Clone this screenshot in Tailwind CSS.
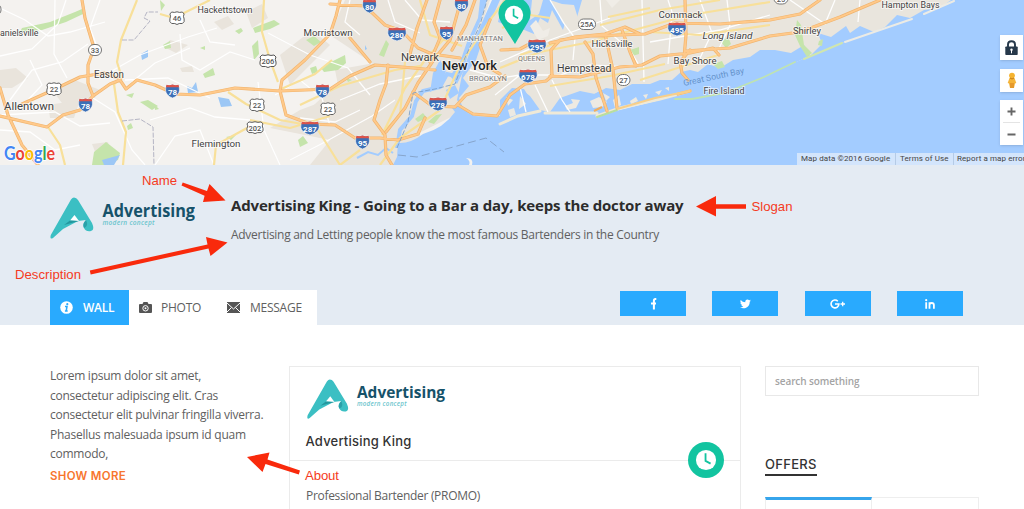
<!DOCTYPE html>
<html lang="en">
<head>
<meta charset="utf-8">
<meta name="viewport" content="width=device-width, initial-scale=1">
<title>Advertising King</title>
<script src="https://cdn.jsdelivr.net/npm/@tailwindcss/browser@4"></script>
</head>
<body class="bg-white">
<div class="relative h-[509px] w-[1024px] overflow-hidden bg-white font-['Open_Sans',sans-serif] text-[#606060]">

<!-- Shared symbols -->
<svg class="absolute h-0 w-0" aria-hidden="true">
  <defs>
    <symbol id="interstate" viewBox="0 0 20 16" preserveAspectRatio="none"><path d="M2 1Q6 2 10 0.5Q14 2 18 1Q21 8 17 12Q14 15 10 16Q6 15 3 12Q-1 8 2 1Z" fill="#3c6fb6" stroke="#fff" stroke-width=".7"/><path d="M2 .8Q6 2 10 .5Q14 2 18 .8L18.8 3.8H1.2Z" fill="#dc5349"/></symbol>
    <symbol id="usroute" viewBox="0 0 18 14" preserveAspectRatio="none"><path d="M3 1Q6 2 9 .8Q12 2 15 1L17 3Q15.500 5 17 8Q18 11 15 12.500Q11 12 9 13.500Q7 12 3 12.500Q0 11 1 8Q2.500 5 1 3Z" fill="#fff" stroke="#555" stroke-width="1"/></symbol>
    <symbol id="brand" viewBox="0 0 145 43">
      <path d="M24 .5Q26.500 .5 28 3L42 26Q45 33 41 34Q36 35 34 31Q32 27 36 23L28 24L13 32L3 41Q-.5 43 .8 38L21 2.500Q22.500 .5 24 .5Z" fill="#3bbfc3"/>
      <path d="M24.500 18L29 24L20 23.500Z" fill="#fff"/><path d="M20 23.500L29 24L14 28Z" fill="#23979e"/><path d="M36 23Q32 27 34 31Q39 29 36 23Z" fill="#2aa0a8"/>
      <text x="52.500" y="19.500" textLength="92.500" lengthAdjust="spacingAndGlyphs" font-family="Open Sans, sans-serif" font-size="17.500" font-weight="700" fill="#16526a">Advertising</text>
      <text x="52.500" y="28" textLength="52" font-family="Open Sans, sans-serif" font-size="6.500" font-weight="600" font-style="italic" fill="#6cc5cd">modern concept</text>
    </symbol>
    <symbol id="clock" viewBox="0 0 24 24"><circle cx="12" cy="12" r="11" fill="#fff"/><path d="M11.500 4.500V13L17 16" fill="none" stroke="#12c4a0" stroke-width="2"/></symbol>
  </defs>
</svg>

<!-- Map -->
<section class="relative h-[165px] w-full overflow-hidden">
<svg class="block" width="1024" height="165" viewBox="0 0 1024 165">
  <rect width="1024" height="165" fill="#f4f2ef"/>
  <!-- built-up areas -->
  <g fill="#e9e4dc">
    <path d="M345 0H490L470 60L455 115L395 145L380 165H320L345 140L375 118L340 100L300 118L330 90L375 65L330 35Z"/>
    <path d="M280 55L312 30L330 45L290 85Z"/><path d="M335 70L420 55V165H310L330 140L270 128L300 110L340 95Z"/>
    <path d="M52 90L75 80L100 90L90 105L62 103Z"/><path d="M48 105L80 100L74 118L50 118Z"/><path d="M0 70L16 68L28 78L12 88H0Z"/><path d="M170 40L188 45L176 53L164 47Z"/><path d="M214 22L228 16L234 24L222 30Z"/><path d="M246 12L262 4L268 18L252 28Z"/>
    <path d="M92 144L108 142L110 152L96 154Z"/><path d="M180 68L192 66L194 72H182Z"/>
  </g>
  <!-- sea and shore -->
  <path d="M393 165L397 157L398 143Q410 144 423 134Q444 128 455 112L452 108L458 104L463 109Q472 118 490 117L520 108L534 112L545 112L560 112L575 113L597 114L620 110L660 100L680 93L700 98L720 94L764 77L807 57L844 42L900 20L954 0H1024V165Z" fill="#a3ccff"/>
  <path d="M463 0H960L897 24L844 42L807 57L764 78L720 95L700 99L680 94L597 115L540 115L497 130L482 118L465 112L457 100L462 75L472 45L492 0Z" fill="#a3ccff"/>
  <path d="M500 0H951L940 8L924 10L910 18L897 15L885 27L874 32L860 26L850 33L846 26L831 37L818 33L822 44L810 56L804 45L791 53L775 50L760 50L750 57L733 60L720 68L708 64L698 72L690 70L681 72L672 80L660 80L650 84L632 84L620 90L606 88L595 94L580 91L560 98L550 112L540 110L530 96L522 90L512 95L500 108L510 114L494 117L474 116L463 108L459 98L469 86L463 78L476 60L484 36Z" fill="#e9e5dd"/>
  <path d="M498 22L503 0H582L577 17L570 6L563 30L552 10L548 23L540 18L534 34L522 29L513 38L508 26Z" fill="#a3ccff"/>
  <path d="M550 0L556 9L562 22L570 31L580 25L574 5L562 4ZM532 0H543L539 14L530 20Z" fill="#e9e5dd"/>
  <path d="M606 0L612 8L620 0ZM530 26L536 20L543 31L550 28L548 36L538 40Z" fill="#f0ede7"/>
  <path d="M487 0L480 22L470 45L464 70L457 84L450 76L460 62L467 42L478 18L480 0Z" fill="#a3ccff"/>
  <path d="M456 76L447 74L440 87L423 91L416 101L412 116L400 130L397 148" fill="none" stroke="#a3ccff" stroke-width="4"/>
  <path d="M440 60L433 73L430 92L442 86L446 70Z" fill="#a3ccff"/>
  <path d="M446 90L455 85L459 93L450 99Z" fill="#a3ccff"/>
  <path d="M357 158L368 152L378 155L386 148L393 153" fill="none" stroke="#a3ccff" stroke-width="2"/>
  <path d="M500 100L512 88L524 89L532 102L522 118L500 124Z" fill="#a3ccff"/><path d="M506 97l7 3-5 6zM520 96l6 8-7 5zM508 110l6-2 2 7-6 2z" fill="#ece9e2"/>
  <path d="M565 97L590 96L602 90L620 93L640 86L662 85L676 81L684 73L690 83L690 91L640 102L607 111H560Z" fill="#a3ccff"/>
  <g fill="#eeeae2"><path d="M565 106l8-3-2-4 9 1-4 8-9 2zM590 101l9-4 8 5-5 5-9 1zM603 93l7 4-4 4zM613 100l6-5 2 10-6 3zM630 101l6-4 2 4-7 3zM643 95l5-1-2 5zM655 92l7-2-3 5zM665 88l4-1v4z"/></g>
  <g fill="none" stroke-linecap="round">
    <path d="M500 124L518 116L540 111M545 113H597M597 116L620 108L660 99L690 91" stroke="#efe9d7" stroke-width="3"/>
    <path d="M675 99H692L725 93L764 77L795 62" stroke="#bfe3b2" stroke-width="1.800"/><path d="M804 59L842 43" stroke="#d0e6ae" stroke-width="2"/><path d="M845 42L912 19M924 14L954 1" stroke="#ecebe5" stroke-width="2"/>
    <path d="M597 117L617 110" stroke="#b8dea0" stroke-width="2"/>
  </g>
  <path d="M398 155L417 157L486 138L504 152" fill="none" stroke="#87a5cc" stroke-dasharray="8 4"/>
  <path d="M466 158Q474 158 472 165H469Q471 161 466 158Z" fill="#f4f2ef"/>
  <!-- parks -->
  <g fill="#c5e4ab">
    <path d="M22 28L50 22L75 12L82 9L83 14L66 22L42 30L20 32Z"/><path d="M94 152L106 142L120 153L118 160L104 165H92Z"/><path d="M127 126L131 123L133 128L128 130ZM126 95L134 93L132 98ZM140 102L148 100L158 106L152 110ZM155 105l4 4-4 1zM163 45l7-4 1 7-6 1zM200 48l5-2v4zM203 74L213 68L215 75L205 78ZM226 137l10-2-5 5zM235 31l6-3 2 3-4 3z"/>
    <path d="M253 28L274 20L280 24L270 29L255 33ZM306 40L314 36L321 42L314 46ZM321 68L331 62L345 55L346 63L338 70L324 72ZM310 68l6-2 2 6-6 2zM379 55L386 40L389 44L384 57ZM252 46l6-6 1 14-5 6zM298 140l5-4 5 7-8 4zM415 119L423 113L427 118L418 122ZM428 122l8-7 6-1-8 10zM630 50L639 47V54L632 56ZM721 42L728 37L731 44L726 48ZM797 20L801 25L804 45L812 53L807 57L800 46L795 35ZM819 41l4-2-1 7-4-1zM713 64l9-3 3 6-7 2zM160 0l5 5-4 6zM346 78l6 2-4 2z"/>
  </g>
  <g fill="#9cc7f5"><path d="M141 54L148 50V57L142 60ZM187 86L192 88L196 82L198 92L188 93ZM218 97L229 99L232 106L221 107ZM102 160L120 155L114 165H104ZM365 45l2 4-2 1zM364 3h4v4h-4z"/></g>
  <!-- minor roads -->
  <g fill="none" stroke="#fff" stroke-width="1.300" opacity=".95">
    <path d="M0 8L25 20L48 36L70 32L105 22M0 56L32 49L58 24L66 0M10 100L32 70L62 62L88 44M55 0L54 54L67 78M110 72L140 55L188 37L217 28M180 34L182 60L200 70L230 52L255 60M132 82L155 63L190 48M93 98L115 112L132 150L145 165M0 130L30 132L55 150L80 145M150 120L190 108L215 117L250 120M155 165L175 136L200 130L214 165M0 115L55 112L80 126L110 123M258 82L264 130L280 165M268 33L310 55L348 68L370 95M290 160L325 142L372 116L395 100M350 0L345 22L360 35M275 95L300 80L322 98L330 126M200 20L210 42L235 45M125 80L168 78L210 98M20 140L34 160M30 60L42 85L28 100M100 0L90 28L96 44"/>
    <path d="M300 118L335 122L360 110M388 0L395 22L420 33M405 0L422 20L450 22M340 100L380 84L424 75M470 70L500 78L520 75M495 95L520 75L560 75L590 65L625 67M550 0L565 25L575 38L573 60M600 0L602 26L630 50L640 67M642 0L644 82M668 0L672 12L668 64M700 0L712 33L700 58M727 0L730 25L716 55M790 0L825 24L835 0M860 0L858 22M500 62L550 40L610 18M650 42L720 30L770 15M552 80L562 100L570 112M520 87L526 112M535 85L548 112"/>
  </g>
  <!-- secondary roads -->
  <g fill="none" stroke="#f8e09a" stroke-width="2.200" stroke-linejoin="round">
    <path d="M137 0L121 40L117 62L122 78L114 84L118 112L126 132L123 165M48 127L60 145L65 165M160 14L174 18L210 0M214 165L216 145L247 128M264 0L262 32L270 60L278 82M250 120L290 128L330 116M279 90L315 74L332 60M313 122L340 165L360 150M228 92L246 104L280 120L302 124M300 105L340 86L395 70L420 66M420 0L430 35L462 46M405 62L400 115L385 130M380 165L400 138L440 110L460 65L490 20L505 0M382 135L405 88L425 60L450 32M500 68L540 52L590 42L625 32M502 28L530 15L550 18M600 25L660 10L720 0M615 35L690 15L770 2M550 86L610 76L665 64M640 80L690 64L718 55M650 32L700 35L770 25M520 55L560 42M608 17L650 8"/>
  </g>
  <!-- highways -->
  <g fill="none" stroke="#f0b46e" stroke-width="3.200" stroke-linejoin="round" stroke-linecap="round">
    <path id="hw" d="M82 0L85 18L94 48L88 65L88 83L93 96M0 88L8 115L22 145L38 165M0 116L47 127L63 115L80 110L93 96L110 84L120 80L126 89L137 80L155 85L175 94L200 95L235 88L280 91L330 89L350 76L375 65L402 67L435 70M22 104L53 90L80 77L104 73L120 79M340 0L336 16L330 34L305 60L282 80L280 91L286 115L310 124L335 125L355 138L380 138L398 140L418 134L425 118M330 4L365 6L385 25L402 31L418 48L432 54L460 58M350 38L370 62M388 65L386 84L380 100L374 120L385 135L386 155L392 165M386 132L405 108L418 83L435 58L450 40L461 0M413 92L432 106L455 107L466 95L490 87L505 76M410 54L417 28L427 0M440 0L434 22L440 38L430 62M475 0L466 25L452 50M490 20L480 45L488 67L500 74M458 105L473 114L497 116L510 95L525 84L546 81L552 76L551 50L560 40L590 36L620 35L645 34L675 23L720 24L770 20L800 14L820 0M550 43L575 37L605 34L625 27L640 34M585 42L593 54L596 78L607 111M605 34L613 70L617 108M622 30L630 52L636 66M550 76L580 77L620 67L642 65L660 56L690 53L713 48L719 55M690 50L680 62L682 73L688 80M690 91L678 94M685 51L730 48L770 36L800 32L840 17L880 0M685 0L686 35L684 58M501 50L520 49L535 41"/>
    <use href="#hw" stroke="#ffc98a" stroke-width="1.900"/>
  </g>
  <path d="M617 109L655 98L690 91" fill="none" stroke="#f7cf8a" stroke-width="2"/><path d="M594 111L602 107" fill="none" stroke="#f2ae5c" stroke-width="2"/>
  <path d="M122 40L134 40L150 21L144 18L147 12L158 12M122 121L140 119L153 127L154 165" fill="none" stroke="#b5b5c4" stroke-width="1" stroke-dasharray="5 1.500"/>
  <path d="M397 148L408 122L413 93L435 89L455 84L464 60L480 25L487 0" fill="none" stroke="#7b9fc8" stroke-width=".9" stroke-dasharray="5 2"/>
  <!-- interstate shields -->
  <use href="#interstate" x="78" y="98" width="15" height="14"/><use href="#interstate" x="165" y="84" width="15" height="14"/><use href="#interstate" x="315" y="84" width="15" height="14"/><use href="#interstate" x="300" y="121" width="20" height="14"/><use href="#interstate" x="355" y="135" width="15" height="14"/><use href="#interstate" x="362" y="-1" width="15" height="14"/><use href="#interstate" x="387" y="27" width="20" height="14"/><use href="#interstate" x="439" y="26" width="15" height="14"/><use href="#interstate" x="454" y="-2" width="15" height="14"/><use href="#interstate" x="428" y="97" width="20" height="14"/><use href="#interstate" x="527" y="39" width="20" height="14"/><use href="#interstate" x="518" y="69" width="20" height="14"/><use href="#interstate" x="667" y="22" width="20" height="14"/>
  <g font-family="Roboto, sans-serif" font-size="8" font-weight="700" fill="#fff" text-anchor="middle">
    <text x="85.500" y="109">78</text><text x="172.500" y="95">78</text><text x="322.500" y="95">78</text><text x="310" y="132">287</text><text x="362.500" y="146">95</text><text x="369.500" y="10">80</text><text x="397" y="38">280</text><text x="446.500" y="37">95</text><text x="461.500" y="9">80</text><text x="438" y="108">278</text><text x="537" y="50">295</text><text x="528" y="80">678</text><text x="677" y="33">495</text>
  </g>
  <use href="#usroute" x="46" y="82" width="16" height="14"/><use href="#usroute" x="169" y="11" width="16" height="14"/><use href="#usroute" x="249" y="98" width="16" height="14"/><use href="#usroute" x="246" y="121" width="18" height="13"/><use href="#usroute" x="259" y="54" width="18" height="14"/><use href="#usroute" x="320" y="102" width="16" height="14"/>
  <g fill="#fff" stroke="#666" stroke-width=".9"><rect x="88.500" y="44.500" width="13" height="11" rx="5.500"/><rect x="578.500" y="19" width="17" height="10.500" rx="5"/><rect x="617" y="74.500" width="13" height="11" rx="5.500"/><rect x="774" y="-7" width="14" height="11" rx="5.500"/><rect x="-9" y="4" width="10" height="11" rx="5"/></g>
  <g font-family="Roboto, sans-serif" font-size="7.500" font-weight="500" fill="#555" text-anchor="middle"><text x="54" y="92">22</text><text x="177" y="21">46</text><text x="257" y="108">22</text><text x="255" y="131">202</text><text x="268" y="64">206</text><text x="328" y="112">22</text><text x="95" y="52.500">33</text><text x="587" y="27">25A</text><text x="623.500" y="82.500">27</text><text x="781" y="2">25</text></g>
  <!-- place names -->
  <g font-family="Roboto, sans-serif" font-size="9.500" fill="#434343" stroke="#fff" stroke-opacity=".6" stroke-width="2" paint-order="stroke" stroke-linejoin="round">
    <text x="197.500" y="13" textLength="55" lengthAdjust="spacingAndGlyphs">Hackettstown</text><text x="0" y="36" textLength="38.500" lengthAdjust="spacingAndGlyphs">anielsville</text><text x="94" y="78" textLength="30" lengthAdjust="spacingAndGlyphs" font-size="10">Easton</text><text x="4" y="110" textLength="50" lengthAdjust="spacingAndGlyphs" font-size="11.500">Allentown</text><text x="191.500" y="147" textLength="49" lengthAdjust="spacingAndGlyphs">Flemington</text><text x="303.500" y="35.500" textLength="49" lengthAdjust="spacingAndGlyphs">Morristown</text><text x="401" y="60.500" textLength="38" lengthAdjust="spacingAndGlyphs" font-size="11">Newark</text>
    <text x="442" y="69.500" textLength="55" lengthAdjust="spacingAndGlyphs" font-size="13" font-weight="500" fill="#222">New York</text>
    <text x="457" y="40.500" textLength="46" lengthAdjust="spacingAndGlyphs" font-size="7.500" fill="#777">MANHATTAN</text><text x="469" y="81" textLength="38" lengthAdjust="spacingAndGlyphs" font-size="7.500" fill="#777">BROOKLYN</text><text x="518" y="61" textLength="27" lengthAdjust="spacingAndGlyphs" font-size="7.200" fill="#777">QUEENS</text>
    <text x="591.500" y="47" textLength="41" lengthAdjust="spacingAndGlyphs">Hicksville</text><text x="557" y="71.500" textLength="54.500" lengthAdjust="spacingAndGlyphs" font-size="11">Hempstead</text><text x="658.500" y="17.500" textLength="44" lengthAdjust="spacingAndGlyphs">Commack</text><text x="702.500" y="38.500" textLength="50" lengthAdjust="spacingAndGlyphs" font-style="italic" font-size="9.800">Long Island</text><text x="673.500" y="64" textLength="43" lengthAdjust="spacingAndGlyphs">Bay Shore</text><text x="703.500" y="93.500" textLength="41" lengthAdjust="spacingAndGlyphs" font-size="9">Fire Island</text><text x="793" y="33.500" textLength="28" lengthAdjust="spacingAndGlyphs">Shirley</text><text x="881.500" y="7.500" textLength="58" lengthAdjust="spacingAndGlyphs" font-size="9">Hampton Bays</text>
  </g>
  <text transform="translate(684 86) rotate(-12)" textLength="62" lengthAdjust="spacingAndGlyphs" font-family="Roboto, sans-serif" font-size="8.500" fill="#6593cc">Great South Bay</text>
  <!-- Google wordmark -->
  <text x="4" y="159.500" textLength="51" lengthAdjust="spacingAndGlyphs" font-family="Lato, sans-serif" font-size="18" font-weight="700" stroke="#fff" stroke-width="1.500" paint-order="stroke"><tspan fill="#4285f4">G</tspan><tspan fill="#ea4335">o</tspan><tspan fill="#fbbc05">o</tspan><tspan fill="#4285f4">g</tspan><tspan fill="#34a853">l</tspan><tspan fill="#ea4335">e</tspan></text>
  <!-- marker -->
  <path d="M515 44L501 22A16 16 0 1 1 528 22Z" fill="#12c4a0"/><use href="#clock" x="504" y="5" width="20" height="20"/>
</svg>
<div class="absolute right-px top-[35px] flex w-[23px] flex-col">
  <div class="grid h-[25px] place-items-center bg-white shadow-sm"><svg width="13" height="16" viewBox="0 0 13 16"><path d="M3 8V4.500Q3 1.200 6.500 1.200T10 4.500V8" fill="none" stroke="#26384a" stroke-width="1.900"/><rect x=".3" y="6.500" width="12.400" height="8.500" rx=".8" fill="#26384a"/><circle cx="6.500" cy="9.800" r="1.200" fill="#fff"/><path d="M6.500 10V13.300" stroke="#fff"/></svg></div>
  <div class="mt-[9px] grid h-[23px] place-items-center bg-white shadow-sm"><svg width="10" height="17" viewBox="0 0 10 17"><path d="M2.500 6H7.500L9.300 11L8 11.500L7 16H3L2 11.500L.7 11Z" fill="#f4b43a"/><path d="M3 11H7V16H3Z" fill="#e5992c"/><circle cx="5" cy="3.600" r="2.900" fill="#f5b32f"/><path d="M3 6Q5 8 7 6" stroke="#c47a16" fill="none"/></svg></div>
  <div class="mt-2 flex h-[45px] flex-col items-center bg-white shadow-sm"><svg width="23" height="45" viewBox="0 0 23 45"><path d="M7.500 11.500H15.500M11.500 7.500V15.500M7.500 34.500H15.500" stroke="#666" stroke-width="1.900"/><path d="M3 22.500H20" stroke="#e4e4e4"/></svg></div>
</div>
<div class="absolute bottom-0 left-[797px] flex h-3 w-[230px] items-center whitespace-nowrap bg-[#d3e5fc] font-[Roboto] text-[8px] leading-3 tracking-[0.1px] text-[#444]">
  <span class="w-[98px] pl-1">Map data ©2016 Google</span><span class="w-[58px] border-l border-[#b5cbe6] pl-1">Terms of Use</span><span class="border-l border-[#b5cbe6] pl-[3px]">Report a map error</span>
</div>
</section>

<!-- Profile header -->
<header class="h-[160px] bg-[#e4ebf3] pl-[50px]">
  <div class="flex h-[125px]">
    <svg class="mt-8 h-[43px] w-[145px] shrink-0"><use href="#brand"/></svg>
    <div class="ml-9 pt-[29px] whitespace-nowrap">
      <h1 class="text-[15px] leading-[22px] font-bold tracking-[-0.155px] text-[#2c2c2c]">Advertising King - Going to a Bar a day, keeps the doctor away</h1>
      <p class="mt-2 text-[12px] leading-[22px] tracking-[-0.285px]">Advertising and Letting people know the most famous Bartenders in the Country</p>
    </div>
  </div>
  <div class="flex items-start">
    <nav class="flex h-[35px] w-[267px] bg-white text-[12px] leading-[35px] tracking-[-0.25px]">
      <a class="flex w-[79px] items-center bg-[#29aafe] pl-2.5 font-semibold text-white"><svg class="mr-[10px]" width="13" height="13" viewBox="0 0 13 13"><circle cx="6.500" cy="6.500" r="6.300" fill="#fff"/><circle cx="7.300" cy="3.200" r="1.100" fill="#29aafe"/><path d="M5 5.500H7L6.200 10H7.700M4.900 10H6.200" fill="none" stroke="#29aafe" stroke-width="1.500"/></svg>WALL</a>
      <a class="flex w-[87px] items-center pl-2.5"><svg class="mr-[9px]" width="13" height="11" viewBox="0 0 13 11"><path d="M1 2H3.500L4.500 0H8.500L9.500 2H12Q13 2 13 3V10Q13 11 12 11H1Q0 11 0 10V3Q0 2 1 2Z" fill="#555"/><circle cx="6.500" cy="6.300" r="2.700" fill="none" stroke="#fff" stroke-width="1"/><circle cx="6.500" cy="6.300" r="1" fill="#fff"/></svg>PHOTO</a>
      <a class="flex items-center pl-[11px]"><svg class="mr-[10px]" width="13" height="11" viewBox="0 0 13 11"><path d="M0 0H13V11H0Z" fill="#555"/><path d="M0 1L6.500 7L13 1M0 10L4.500 5.500M13 10L8.500 5.500" fill="none" stroke="#fff" stroke-width="1"/></svg>MESSAGE</a>
    </nav>
    <div class="ml-[303px] mt-px flex gap-[26.400px]">
      <a class="grid h-[25px] w-[66px] place-items-center bg-[#29aafe]"><svg width="7" height="12" viewBox="0 0 7 12"><path d="M6.300 1.100H5.400Q3.900 1.100 3.900 2.700V11.500M1 5.500H6" fill="none" stroke="#fff" stroke-width="2"/></svg></a>
      <a class="grid h-[25px] w-[66px] place-items-center bg-[#29aafe]"><svg width="11" height="10" viewBox="0 0 24 20"><path d="M23.600 2.400a9.600 9.600 0 0 1-2.800.8A4.800 4.800 0 0 0 23 .5a10 10 0 0 1-3.100 1.200 4.900 4.900 0 0 0-8.300 4.400A13.800 13.800 0 0 1 1.600 1a4.900 4.900 0 0 0 1.500 6.500 5 5 0 0 1-2.200-.6 4.900 4.900 0 0 0 3.900 4.900 5 5 0 0 1-2.200.1 4.900 4.900 0 0 0 4.600 3.400A10 10 0 0 1 .1 17.300 13.900 13.900 0 0 0 21.200 5a9.600 9.600 0 0 0 2.400-2.600z" fill="#fff"/></svg></a>
      <a class="grid h-[25px] w-[66px] place-items-center bg-[#29aafe]"><svg width="15" height="10" viewBox="0 0 15 10"><path d="M7.800 2.200A3.900 3.900 0 1 0 8.900 5H5" fill="none" stroke="#fff" stroke-width="1.600"/><path d="M10.500 5H15M12.700 2.700V7.300" stroke="#fff" stroke-width="1.300"/></svg></a>
      <a class="grid h-[25px] w-[66px] place-items-center bg-[#29aafe]"><svg width="10" height="10" viewBox="0 0 10 10"><circle cx="1.200" cy="1.200" r="1.100" fill="#fff"/><path d="M1.200 3.200V9.700M4.500 3.200V9.700M4.500 6Q4.500 4 6.700 4T8.900 6V9.700" fill="none" stroke="#fff" stroke-width="1.800"/></svg></a>
    </div>
  </div>
</header>

<!-- Content columns -->
<main class="flex pl-[50px] pt-[41px]">
  <aside class="w-[239px] shrink-0 text-[12px]">
    <p class="whitespace-nowrap leading-[19.600px] tracking-[-0.25px]">Lorem ipsum dolor sit amet,<br>consectetur adipiscing elit. Cras<br>consectetur elit pulvinar fringilla viverra.<br>Phasellus malesuada ipsum id quam<br>commodo,</p>
    <a class="mt-[3px] block font-[Inter] text-[11.500px] leading-[18px] font-semibold tracking-[0.300px] text-[#f7762e]">SHOW MORE</a>
  </aside>
  <article class="relative h-[160px] w-[452px] shrink-0 border border-[#ebebeb] bg-white">
    <div class="h-[94px] border-b border-[#ebebeb] pl-[15.500px] pt-3">
      <svg class="block h-[41px] w-[140px]"><use href="#brand"/></svg>
      <h2 class="mt-[13px] font-[Inter] text-[13px] leading-4 font-medium tracking-[0.200px] text-[#333]">Advertising King</h2>
    </div>
    <p class="pl-4 pt-6 text-[12px] leading-[22px] tracking-[-0.300px]">Professional Bartender (PROMO)</p>
    <div class="absolute left-[398px] top-[75px] grid size-9 place-items-center rounded-full bg-[#12c4a0]"><svg width="22" height="22"><use href="#clock"/></svg></div>
  </article>
  <aside class="ml-6 w-[214px] shrink-0">
    <div class="flex h-[30px] items-center border border-[#e8e8e8] pl-[9px] text-[10px] font-semibold tracking-[-0.100px] text-[#a4a4a4]">search something</div>
    <h3 class="mt-[58px] block h-[22px] w-[52px] border-b-2 border-[#333] font-[Inter] text-[13px] leading-5 font-medium tracking-[0.300px] text-[#333]">OFFERS</h3>
    <div class="mt-[21px] flex h-10"><div class="w-[107px] border-x border-t-3 border-x-[#eee] border-t-[#36a5ec]"></div><div class="flex-1 border-r border-t border-[#eee]"></div></div>
  </aside>
</main>

<!-- Callouts -->
<svg class="absolute left-0 top-0" width="1024" height="509" viewBox="0 0 1024 509">
  <g fill="#f92a0c">
    <path d="M182.700 182.500L181.500 185.500L204.600 195.800L203 202L225.500 200.500L209.500 184L207 191Z"/>
    <path d="M89.800 270.500L90.700 274.500L208.500 248.500L210.500 256L227.500 242.500L206 237L207.500 244.500Z"/>
    <path d="M696 206.500L716 196V204.300H746V208.700H716V216.500Z"/>
    <path d="M247 457L269.500 452.500L267.500 459.500L300 470.500L298.800 474.500L265.500 464L262.500 472Z"/>
  </g>
  <g font-family="Liberation Sans, sans-serif" font-size="13.200" fill="#f53a22">
    <text x="142" y="185" textLength="35">Name</text><text x="15" y="279" textLength="66">Description</text><text x="751.500" y="210.500" textLength="41">Slogan</text><text x="305" y="480" textLength="34">About</text>
  </g>
</svg>
</div>
</body>
</html>
